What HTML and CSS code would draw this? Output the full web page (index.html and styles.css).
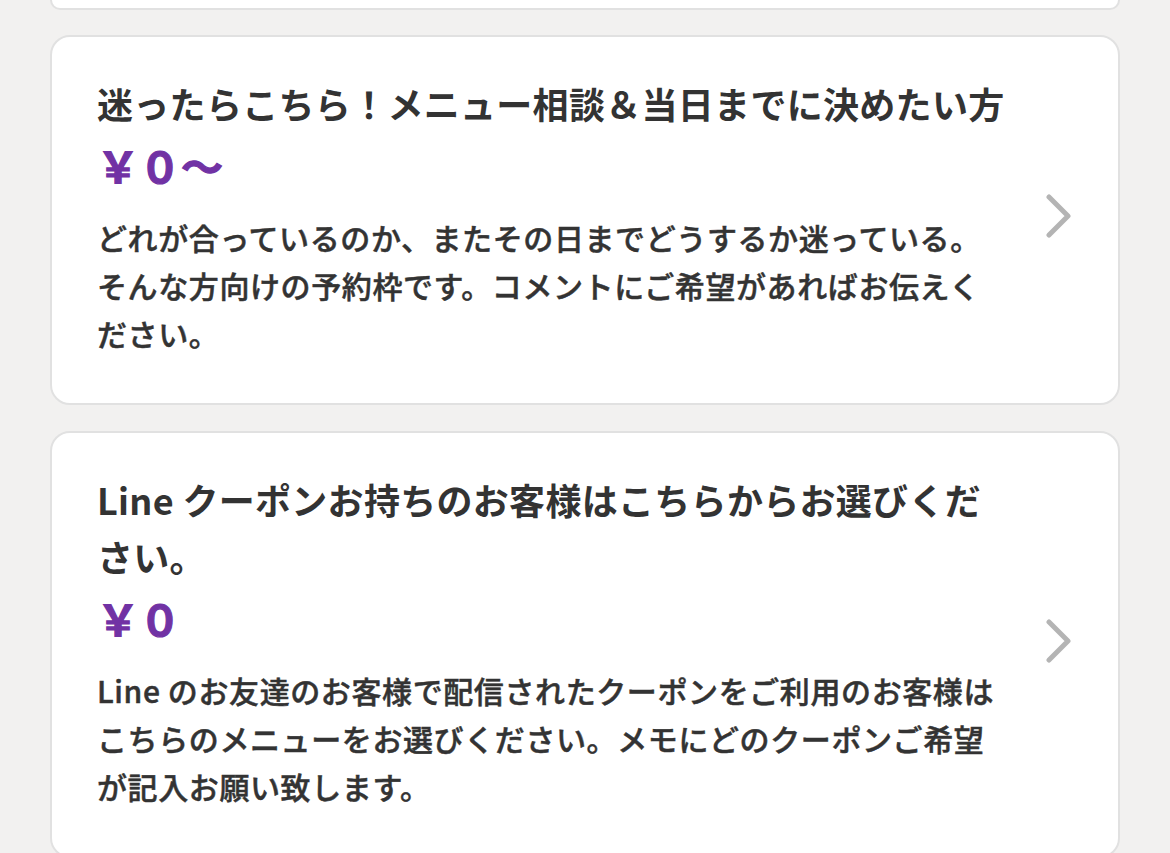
FILE: index.html
```html
<!DOCTYPE html>
<html lang="ja">
<head>
	<meta charset="UTF-8" />
	<title>メニュー</title>
	<link rel="stylesheet" href="styles.css">
</head>
<body>
	<div class="menu-list">
		<div class="card card-stub"></div>
		<a class="card" href="#">
			<div class="card-body">
				<h2 class="card-title">迷ったらこちら！メニュー相談＆当日までに決めたい方</h2>
				<p class="card-price">￥０〜</p>
				<p class="card-desc">どれが合っているのか、またその日までどうするか迷っている。そんな方向けの予約枠です。コメントにご希望があればお伝えください。</p>
			</div>
			<svg class="card-arrow" viewBox="0 0 26 44" width="26" height="44">
				<polyline points="3,3 22,22 3,41" fill="none" stroke="#b4b4b4" stroke-width="5" stroke-linecap="round" stroke-linejoin="round"/>
			</svg>
		</a>
		<a class="card" href="#">
			<div class="card-body">
				<h2 class="card-title">Line クーポンお持ちのお客様はこちらからお選びください。</h2>
				<p class="card-price">￥０</p>
				<p class="card-desc">Line のお友達のお客様で配信されたクーポンをご利用のお客様はこちらのメニューをお選びください。メモにどのクーポンご希望が記入お願い致します。</p>
			</div>
			<svg class="card-arrow" viewBox="0 0 26 44" width="26" height="44">
				<polyline points="3,3 22,22 3,41" fill="none" stroke="#b4b4b4" stroke-width="5" stroke-linecap="round" stroke-linejoin="round"/>
			</svg>
		</a>
	</div>
</body>
</html>
```

FILE: styles.css
```css
*{
	box-sizing: border-box;
}
body{
	margin:0;
	background:#f2f1f0;
	font-family:"Noto Sans CJK JP","Noto Sans",sans-serif;
	color:#333333;
}
.menu-list{
	padding:0 50px;
}
.card{
	display:flex;
	align-items:center;
	gap:40px;
	background:#fff;
	border:2px solid #e1e1e1;
	border-radius:20px;
	padding:38px 46px 46px 45px;
	margin-bottom:26px;
	color:inherit;
	text-decoration:none;
}
.card-stub{
	height:10px;
	padding:0;
	border-top:none;
	border-radius:0 0 20px 20px;
	margin-bottom:25px;
}
.card-body{
	flex:1;
	min-width:0;
}
.card-title{
	margin:0;
	font-size:36px;
	line-height:57px;
	font-weight:700;
	letter-spacing:0.3px;
}
.card-price{
	margin:0;
	font-size:42px;
	line-height:66px;
	font-weight:700;
	color:#7132a4;
	-webkit-text-stroke:1.2px #7132a4;
}
.card-desc{
	margin:15px 0 0;
	font-size:30px;
	line-height:48px;
	font-weight:500;
	letter-spacing:0.6px;
	-webkit-text-stroke:0.5px #333333;
}
.card-arrow{
	flex:none;
	display:block;
}
```
